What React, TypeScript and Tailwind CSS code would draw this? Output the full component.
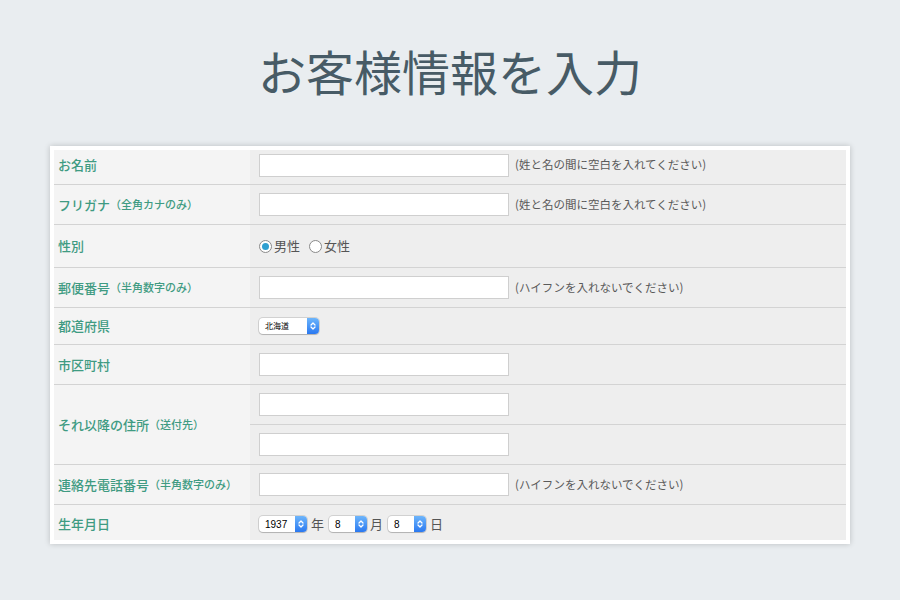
import React from "react";

const jp = "font-['Noto_Sans_CJK_JP','Noto_Sans',sans-serif]";

function TextInput() {
  return <div className="h-[23px] w-[250px] shrink-0 border border-[#cfcfcf] bg-white" />;
}

function Hint({ children }: { children: React.ReactNode }) {
  return <span className="ml-[6px] text-[11.5px] text-[#5a5a5a]">{children}</span>;
}

function Chevrons() {
  return (
    <svg width="8" height="10" viewBox="0 0 8 10" fill="none">
      <path d="M2 4 L4 2 L6 4" stroke="white" strokeWidth="1.3" strokeLinecap="round" strokeLinejoin="round" />
      <path d="M2 6 L4 8 L6 6" stroke="white" strokeWidth="1.3" strokeLinecap="round" strokeLinejoin="round" />
    </svg>
  );
}

function MacSelect({ value, width, small }: { value: string; width: string; small?: boolean }) {
  return (
    <div
      className={`flex h-[16px] shrink-0 items-stretch overflow-hidden rounded-[4px] bg-white shadow-[0_0_0_1px_rgba(0,0,0,0.12),0_1px_1px_rgba(0,0,0,0.15)] ${width}`}
    >
      <span
        className={`flex flex-1 items-center pl-[6px] text-black ${
          small ? "text-[8px]" : "text-[10px] font-['Liberation_Sans',sans-serif]"
        }`}
      >
        {value}
      </span>
      <span className="flex w-[12px] items-center justify-center bg-gradient-to-b from-[#6db5fb] to-[#2a78f0]">
        <Chevrons />
      </span>
    </div>
  );
}

function Radio({ checked, label }: { checked?: boolean; label: string }) {
  return (
    <label className="flex items-center gap-[2px]">
      <span className="flex h-[13px] w-[13px] items-center justify-center rounded-full border border-[#8a8a8a] bg-white">
        {checked && <span className="h-[7px] w-[7px] rounded-full bg-[#2f9fd0]" />}
      </span>
      <span className="text-[13px] text-[#555]">{label}</span>
    </label>
  );
}

type Row = {
  label: string;
  sub?: string;
  h: string;
  pad?: string;
  content: React.ReactNode;
};

const nameHint = "(姓と名の間に空白を入れてください)";
const hyphenHint = "(ハイフンを入れないでください)";

const rows: Row[] = [
  {
    label: "お名前",
    h: "h-[35px]",
    pad: "pb-[4px]",
    content: (
      <>
        <TextInput />
        <Hint>{nameHint}</Hint>
      </>
    ),
  },
  {
    label: "フリガナ",
    sub: "（全角カナのみ）",
    h: "h-[40px]",
    content: (
      <>
        <TextInput />
        <Hint>{nameHint}</Hint>
      </>
    ),
  },
  {
    label: "性別",
    h: "h-[43px]",
    content: (
      <div className="flex items-center gap-[9px]">
        <Radio checked label="男性" />
        <Radio label="女性" />
      </div>
    ),
  },
  {
    label: "郵便番号",
    sub: "（半角数字のみ）",
    h: "h-[40px]",
    content: (
      <>
        <TextInput />
        <Hint>{hyphenHint}</Hint>
      </>
    ),
  },
  {
    label: "都道府県",
    h: "h-[37px]",
    content: <MacSelect value="北海道" width="w-[60px]" small />,
  },
  {
    label: "市区町村",
    h: "h-[40px]",
    content: <TextInput />,
  },
];

const rowsAfter: Row[] = [
  {
    label: "連絡先電話番号",
    sub: "（半角数字のみ）",
    h: "h-[40px]",
    content: (
      <>
        <TextInput />
        <Hint>{hyphenHint}</Hint>
      </>
    ),
  },
  {
    label: "生年月日",
    h: "h-[35px]",
    pad: "pt-[3px]",
    content: (
      <div className="flex items-center text-[13px] text-[#555]">
        <MacSelect value="1937" width="w-[48px]" />
        <span className="ml-[4px] mr-[5px]">年</span>
        <MacSelect value="8" width="w-[38px]" />
        <span className="ml-[3px] mr-[5px]">月</span>
        <MacSelect value="8" width="w-[38px]" />
        <span className="ml-[4px]">日</span>
      </div>
    ),
  },
];

function Label({ label, sub, pad = "" }: { label: string; sub?: string; pad?: string }) {
  return (
    <div className={`flex items-center bg-[#f4f4f4] pl-[4px] text-[#3f9b82] ${pad}`}>
      <span className="text-[13px] font-medium">{label}</span>
      {sub && <span className="text-[11px] font-medium">{sub}</span>}
    </div>
  );
}

function FormRow({ row, last }: { row: Row; last?: boolean }) {
  return (
    <div
      className={`grid grid-cols-[196px_1fr] ${row.h} ${last ? "" : "border-b border-[#d3d3d3]"}`}
    >
      <Label label={row.label} sub={row.sub} pad={row.pad} />
      <div className={`flex items-center bg-[#eeeeee] pl-[9px] ${row.pad ?? ""}`}>{row.content}</div>
    </div>
  );
}

export default function App() {
  return (
    <div className={`h-[600px] w-[900px] bg-[#e9edf0] ${jp}`}>
      <h1 className="pt-[44px] text-center text-[48px] leading-[52px] font-normal text-[#475b66]">
        お客様情報を入力
      </h1>
      <div className="mx-auto mt-[50px] w-[800px] bg-white p-[4px] shadow-[0_0_6px_rgba(0,0,0,0.2)]">
        {rows.map((r) => (
          <FormRow key={r.label} row={r} />
        ))}

        {/* 住所（2行） */}
        <div className="grid h-[80px] grid-cols-[196px_1fr] border-b border-[#d3d3d3]">
          <Label label="それ以降の住所" sub="（送付先）" />
          <div className="flex flex-col bg-[#eeeeee]">
            <div className="flex h-[40px] items-center border-b border-[#d3d3d3] pl-[9px]">
              <TextInput />
            </div>
            <div className="flex flex-1 items-center pl-[9px]">
              <TextInput />
            </div>
          </div>
        </div>

        {rowsAfter.map((r, i) => (
          <FormRow key={r.label} row={r} last={i === rowsAfter.length - 1} />
        ))}
      </div>
    </div>
  );
}
